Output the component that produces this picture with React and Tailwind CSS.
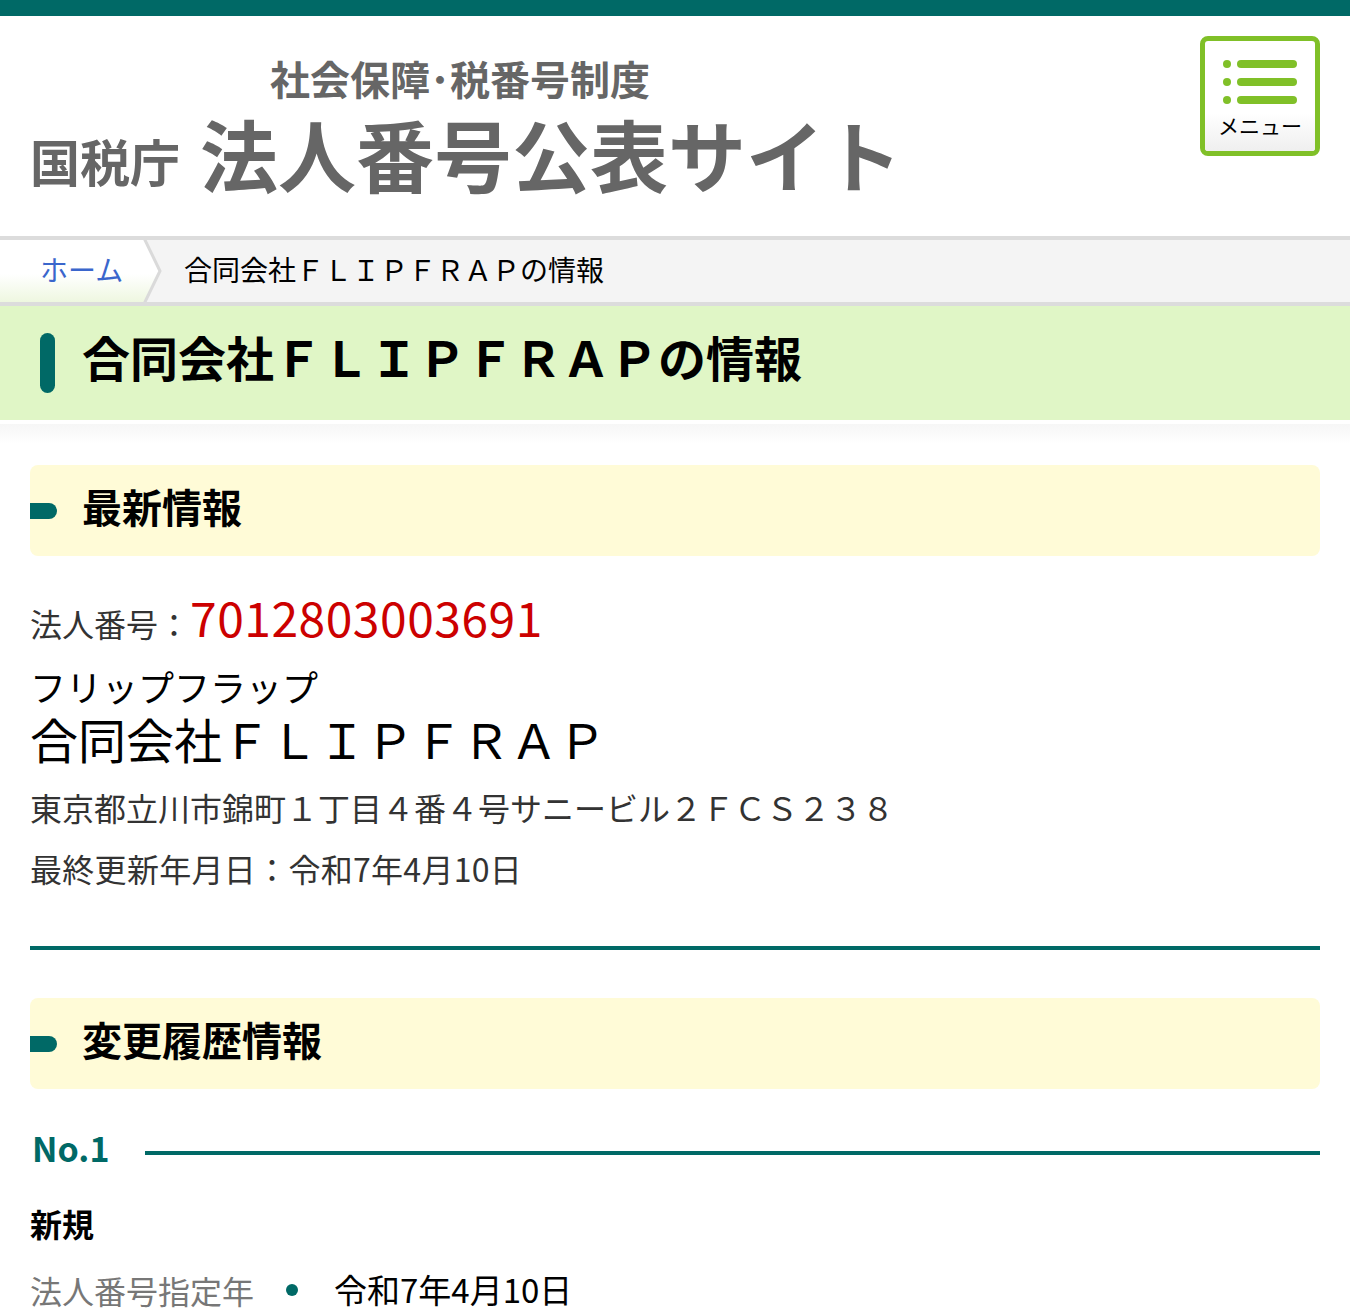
// App.jsx
// 法人番号公表サイト — corporate number detail page

const FONT = { fontFamily: '"Noto Sans CJK JP", "Noto Sans", sans-serif' };

const MenuButton = () => (
  <button className="w-[120px] h-[120px] rounded-[8px] border-[5px] border-[#80c028] bg-white overflow-hidden flex flex-col">
    <div className="flex flex-col gap-[10px] pt-[19px] pl-[18px] h-[72px]">
      {[0, 1, 2].map((i) => (
        <div key={i} className="flex items-center gap-[6px]">
          <span className="w-[8px] h-[8px] rounded-full bg-[#80c028]" />
          <span className="w-[60px] h-[8px] rounded-full bg-[#80c028]" />
        </div>
      ))}
    </div>
    <div className="flex-1 bg-gradient-to-b from-white to-[#efefef] flex justify-center pt-[2px] text-[21px] leading-none text-black">
      メニュー
    </div>
  </button>
);

const SectionHeading = ({ children }) => (
  <div className="flex items-center h-[91px] bg-[#fffbd7] rounded-[8px]">
    <span className="w-[27px] h-[16px] bg-[#006966] rounded-r-full" />
    <h2 className="ml-[25px] mb-[10px] text-[40px] font-bold text-black leading-none">{children}</h2>
  </div>
);

export default function App() {
  return (
    <div className="bg-white min-h-[1314px] overflow-hidden" style={FONT}>
      {/* top bar */}
      <div className="h-[16px] bg-[#006966]" />

      {/* header */}
      <header className="h-[220px] flex justify-between items-start px-[30px] pt-[20px]">
        <div className="text-[#666] pt-[22px]">
          <div className="ml-[240px] text-[40px] font-bold leading-none">社会保障･税番号制度</div>
          <div className="flex items-end gap-[20px] mt-[16px]">
            <span className="text-[50px] font-bold leading-none mb-[7px]">国税庁</span>
            <span className="text-[78px] font-bold leading-none">法人番号公表サイト</span>
          </div>
        </div>
        <MenuButton />
      </header>

      {/* breadcrumb */}
      <nav className="flex items-center h-[70px] border-y-4 border-[#dcdcdc] bg-[#f4f4f4]">
        <div className="h-full w-[140px] flex items-center pl-[40px] bg-gradient-to-b from-white from-55% to-[#eef7e0]">
          <a className="text-[28px] text-[#3a66cc] leading-none whitespace-nowrap mb-[4px]">ホーム</a>
        </div>
        <svg width="24" height="62" viewBox="0 0 24 62" className="shrink-0">
          <defs>
            <linearGradient id="hg" x1="0" y1="0" x2="0" y2="1">
              <stop offset="55%" stopColor="#ffffff" />
              <stop offset="100%" stopColor="#eef7e0" />
            </linearGradient>
          </defs>
          <polygon points="0,0 4,0 20,31 4,62 0,62" fill="url(#hg)" />
          <polyline points="4,-2 20,31 4,64" fill="none" stroke="#dadada" strokeWidth="3" />
        </svg>
        <span className="ml-[20px] mb-[4px] text-[28px] text-black leading-none">合同会社ＦＬＩＰＦＲＡＰの情報</span>
      </nav>

      {/* page title */}
      <div className="h-[114px] bg-[#e0f6c6] flex items-center pl-[40px]">
        <span className="w-[15px] h-[60px] rounded-full bg-[#006966]" />
        <h1 className="ml-[27px] mb-[14px] text-[48px] font-bold text-black leading-none">合同会社ＦＬＩＰＦＲＡＰの情報</h1>
      </div>
      <div className="h-[4px] bg-white" />
      <div className="h-[20px] bg-gradient-to-b from-[#f6f6f6] to-white" />

      <main className="px-[30px] pt-[21px]">
        <SectionHeading>最新情報</SectionHeading>

        <div className="mt-[36px] flex items-baseline">
          <span className="text-[32px] text-[#333] leading-none">法人番号：</span>
          <span className="text-[48px] text-[#cc0000] leading-none tracking-[0.5px]">7012803003691</span>
        </div>
        <div className="mt-[26px] text-[36px] text-black leading-[40px]">フリップフラップ</div>
        <div className="mt-[6px] text-[48px] text-black leading-[52px]">合同会社ＦＬＩＰＦＲＡＰ</div>
        <div className="mt-[27px] text-[32px] text-[#333] leading-none">東京都立川市錦町１丁目４番４号サニービル２ＦＣＳ２３８</div>
        <div className="mt-[29px] text-[32px] text-[#333] leading-none tracking-[0.3px]">最終更新年月日：令和7年4月10日</div>

        <hr className="mt-[62px] border-0 h-[4px] bg-[#006966]" />

        <div className="mt-[48px]">
          <SectionHeading>変更履歴情報</SectionHeading>
        </div>

        <div className="mt-[42px] flex items-end">
          <span className="ml-[2px] text-[34px] font-bold text-[#006966] leading-none">No.1</span>
          <span className="ml-[36px] mb-[10px] flex-1 h-[4px] bg-[#006966]" />
        </div>

        <h3 className="mt-[42px] text-[32px] font-bold text-black leading-none">新規</h3>

        <div className="mt-[34px] flex items-center">
          <span className="text-[32px] text-[#777] leading-none">法人番号指定年</span>
          <span className="ml-[32px] w-[12px] h-[12px] rounded-full bg-[#006966]" />
          <span className="ml-[36px] text-[33px] text-black leading-none">令和7年4月10日</span>
        </div>
      </main>
    </div>
  );
}
